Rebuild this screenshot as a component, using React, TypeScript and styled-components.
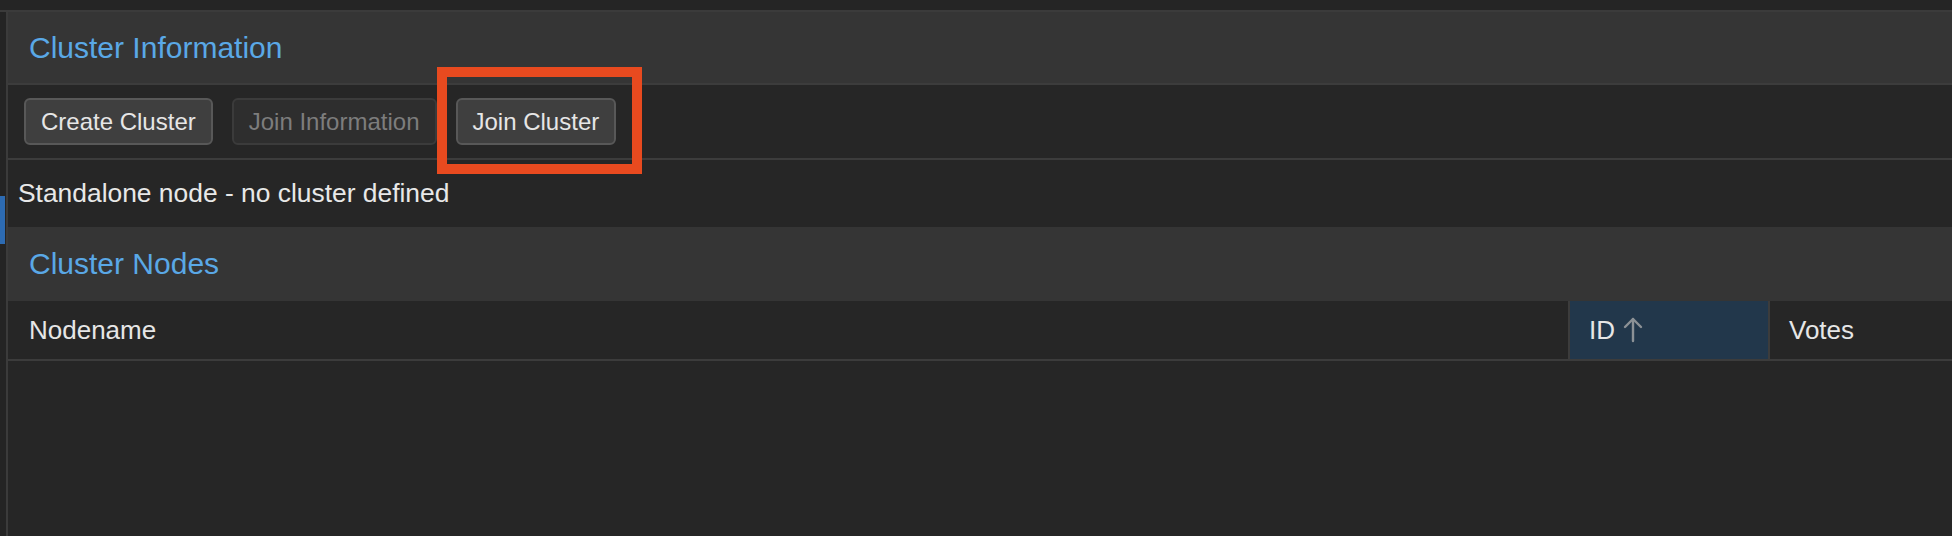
import React from 'react';
import styled, { createGlobalStyle } from 'styled-components';

const Global = createGlobalStyle`
  html, body { margin: 0; padding: 0; background: #262626; }
  body { font-family: "Liberation Sans", Arial, Helvetica, sans-serif; }
  * { box-sizing: border-box; }
`;

const Page = styled.div`
  width: 1952px;
  height: 536px;
  display: flex;
  flex-direction: column;
  background: #262626;
  overflow: hidden;
`;

const TopBar = styled.div`
  flex: none;
  height: 12px;
  background: #252525;
  border-bottom: 2px solid #3b3b3b;
`;

const Main = styled.div`
  flex: 1;
  display: flex;
  min-height: 0;
`;

const Rail = styled.div`
  flex: none;
  width: 8px;
  background: #242424;
  border-right: 2px solid #3b3b3b;
  padding-top: 184px;
`;

const RailMarker = styled.div`
  width: 5px;
  height: 48px;
  background: #2d6bb2;
`;

const Panel = styled.div`
  flex: 1;
  display: flex;
  flex-direction: column;
  min-width: 0;
`;

const SectionHeader = styled.div<{ $height: number; $bordered?: boolean }>`
  flex: none;
  height: ${(p) => p.$height}px;
  display: flex;
  align-items: center;
  padding-left: 21px;
  background: #353535;
  border-bottom: ${(p) => (p.$bordered ? '2px solid #3c3c3c' : 'none')};
  color: #5aa8e6;
  font-size: 30px;
`;

const Toolbar = styled.div`
  flex: none;
  height: 75px;
  display: flex;
  align-items: center;
  gap: 19px;
  padding: 0 16px;
  border-bottom: 2px solid #3c3c3c;
`;

const Button = styled.button<{ $disabled?: boolean }>`
  height: 47px;
  padding: 0 15px;
  border-radius: 6px;
  border: 2px solid ${(p) => (p.$disabled ? '#3b3b3b' : '#585858')};
  background: ${(p) => (p.$disabled ? '#2e2e2e' : '#3f3f3f')};
  color: ${(p) => (p.$disabled ? '#7d7d7d' : '#e6e6e6')};
  font-family: "Liberation Sans", Arial, sans-serif;
  font-size: 24px;
  line-height: 1;
  cursor: default;
`;

const Highlighted = styled.span`
  position: relative;
  display: inline-flex;
`;

const HighlightBox = styled.span`
  position: absolute;
  top: -31px;
  left: -19px;
  right: -26px;
  bottom: -29px;
  border: 10px solid #e84a1f;
  pointer-events: none;
`;

const StatusRow = styled.div`
  flex: none;
  height: 67px;
  display: flex;
  align-items: center;
  padding-left: 10px;
  color: #e8e8e8;
  font-size: 26.4px;
`;

const GridHeader = styled.div`
  flex: none;
  height: 60px;
  display: grid;
  grid-template-columns: 1fr 200px 184px;
  border-bottom: 2px solid #3c3c3c;
`;

const HeaderCell = styled.div<{ $sorted?: boolean; $divider?: boolean }>`
  display: flex;
  align-items: center;
  gap: 8px;
  padding-left: ${(p) => (p.$divider ? 19 : 21)}px;
  background: ${(p) => (p.$sorted ? '#22374b' : '#262626')};
  border-left: ${(p) => (p.$divider ? '2px solid #3c3c3c' : 'none')};
  color: #e6e6e6;
  font-size: 26px;
`;

const GridBody = styled.div`
  flex: 1;
  background: #262626;
`;

const SortArrow = () => (
  <svg width="20" height="26" viewBox="0 0 20 26" fill="none" stroke="#8c9196" strokeWidth="2.4" strokeLinecap="round" strokeLinejoin="round">
    <path d="M10 2v22" />
    <path d="M2 10l8-8 8 8" />
  </svg>
);

export default function App() {
  return (
    <>
      <Global />
      <Page>
        <TopBar />
        <Main>
          <Rail>
            <RailMarker />
          </Rail>
          <Panel>
            <SectionHeader $height={73} $bordered>Cluster Information</SectionHeader>
            <Toolbar>
              <Button>Create Cluster</Button>
              <Button $disabled>Join Information</Button>
              <Highlighted>
                <Button>Join Cluster</Button>
                <HighlightBox />
              </Highlighted>
            </Toolbar>
            <StatusRow>Standalone node - no cluster defined</StatusRow>
            <SectionHeader $height={74}>Cluster Nodes</SectionHeader>
            <GridHeader>
              <HeaderCell>Nodename</HeaderCell>
              <HeaderCell $sorted $divider>
                ID
                <SortArrow />
              </HeaderCell>
              <HeaderCell $divider>Votes</HeaderCell>
            </GridHeader>
            <GridBody />
          </Panel>
        </Main>
      </Page>
    </>
  );
}
